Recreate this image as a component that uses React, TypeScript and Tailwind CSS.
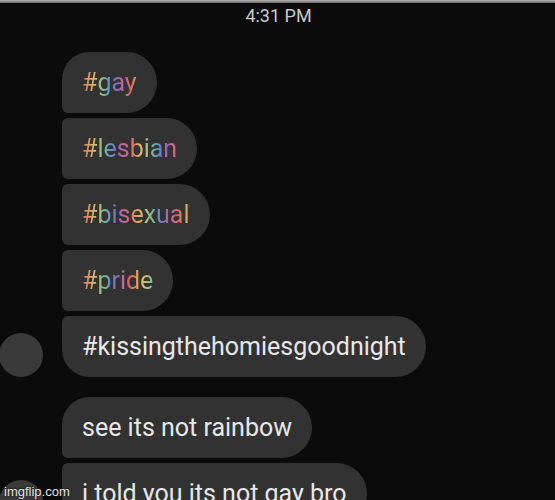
import React from "react";

type Msg = { text: string; rainbow?: boolean };

const groups: Msg[][] = [
  [
    { text: "#gay", rainbow: true },
    { text: "#lesbian", rainbow: true },
    { text: "#bisexual", rainbow: true },
    { text: "#pride", rainbow: true },
    { text: "#kissingthehomiesgoodnight" },
  ],
  [{ text: "see its not rainbow" }, { text: "i told you its not gay bro" }],
];

function Bubble({ msg, first, last }: { msg: Msg; first: boolean; last: boolean }) {
  const corners = first
    ? "rounded-tl-[28px] rounded-bl-[6px]"
    : last
    ? "rounded-tl-[6px] rounded-bl-[28px]"
    : "rounded-tl-[6px] rounded-bl-[6px]";
  return (
    <div
      className={`bg-[#323232] rounded-r-[31px] ${corners} pl-[20px] pr-[20px] py-4 text-[25px] leading-[29px] whitespace-nowrap`}
    >
      {msg.rainbow ? (
        <span className="bg-[repeating-linear-gradient(90deg,#d9675e_0px,#dca458_8px,#cfc27a_14px,#80bd8c_21px,#6190d0_28px,#9464c0_35px,#cc66a0_42px,#d9675e_48px)] bg-clip-text text-transparent">
          {msg.text}
        </span>
      ) : (
        <span className="text-[#e8e8e8]">{msg.text}</span>
      )}
    </div>
  );
}

export default function App() {
  return (
    <div className="relative w-[555px] h-[500px] overflow-hidden bg-[#0b0b0b] font-['Roboto',sans-serif]">
      <div className="h-[3px] bg-gradient-to-b from-[#b5b5b5] to-[#6a6a6a]" />
      <div className="text-center text-[18px] leading-[20px] text-[#c9c9c9] pt-[3px] pl-[2px]">4:31 PM</div>

      <div className="flex flex-col gap-[20px] mt-[26px]">
        {groups.map((g, gi) => (
          <div key={gi} className="flex items-end">
            <div className="w-[62px] shrink-0">
              <div className="w-[44px] h-[44px] -ml-[1px] rounded-full bg-[#3a3a3a]" />
            </div>
            <div className="flex flex-col items-start gap-[5px]">
              {g.map((m, i) => (
                <Bubble key={i} msg={m} first={i === 0} last={i === g.length - 1} />
              ))}
            </div>
          </div>
        ))}
      </div>

      <div className="absolute left-[4px] top-[484px] text-[13px] leading-[16px] text-white/90 font-['Liberation_Sans',sans-serif] [text-shadow:0_0_2px_#000]">
        imgflip.com
      </div>
    </div>
  );
}
